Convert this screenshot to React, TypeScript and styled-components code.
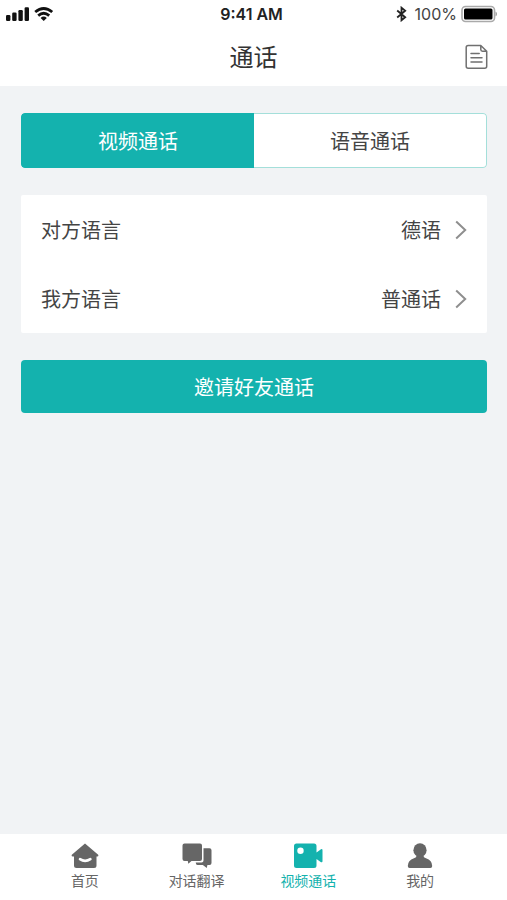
import React, { useState } from "react";
import styled, { createGlobalStyle } from "styled-components";

const teal = "#14b2ae";

const GlobalStyle = createGlobalStyle`
  * { box-sizing: border-box; }
  body {
    margin: 0;
    background: #f1f3f5;
    color: #444;
    font-family: "Noto Sans CJK SC", sans-serif;
  }
  button { font: inherit; color: inherit; border: 0; padding: 0; background: none; cursor: pointer; }
  svg { display: block; flex: none; }
`;

const Page = styled.div`
  display: flex;
  flex-direction: column;
  min-height: 100vh;
`;

const StatusBar = styled.div`
  display: grid;
  grid-template-columns: 1fr auto 1fr;
  align-items: center;
  height: 28px;
  padding: 0 10px 0 6px;
  background: #fff;
  color: #222;
  font: 400 16px/20px Inter, sans-serif;
`;

const StatusGroup = styled.div<{ $end?: boolean }>`
  display: flex;
  align-items: center;
  justify-content: ${(p) => (p.$end ? "flex-end" : "flex-start")};
  gap: 4px;
`;

const Clock = styled.time`
  font-weight: 600;
`;

const Percent = styled.span`
  margin-left: 4px;
  color: #444;
`;

const Header = styled.header`
  display: grid;
  grid-template-columns: 1fr auto 1fr;
  align-items: center;
  height: 58px;
  padding: 0 19px;
  background: #fff;
`;

const Title = styled.h1`
  grid-column: 2;
  margin: 0;
  padding-bottom: 2px;
  color: #333;
  font-size: 24px;
  font-weight: 400;
  line-height: 36px;
`;

const IconButton = styled.button`
  justify-self: end;
`;

const Content = styled.main`
  display: flex;
  flex: 1;
  flex-direction: column;
  gap: 27px;
  padding: 27px 20px 27px 21px;
  font-size: 20px;
  line-height: 30px;
`;

const Segments = styled.div`
  display: flex;
  height: 55px;
  border-radius: 4px;
  overflow: hidden;
`;

const Segment = styled.button<{ $active: boolean }>`
  flex: 1;
  border: 1px solid ${(p) => (p.$active ? teal : "#a4dfda")};
  background: ${(p) => (p.$active ? teal : "#fff")};
  color: ${(p) => (p.$active ? "#fff" : "#444")};
  &:first-child { border-right: 0; border-radius: 4px 0 0 4px; }
  &:last-child { border-left: 0; border-radius: 0 4px 4px 0; }
`;

const Card = styled.div`
  border-radius: 2px;
  background: #fff;
`;

const LanguageRow = styled.button`
  display: flex;
  align-items: center;
  width: 100%;
  height: 69px;
  padding: 0 20px;
`;

const RowValue = styled.span`
  margin: 0 14px 0 auto;
`;

const PrimaryButton = styled.button`
  height: 53px;
  border-radius: 4px;
  background: ${teal};
  color: #fff;
`;

const TabBar = styled.nav`
  display: grid;
  grid-template-columns: repeat(4, 1fr);
  height: 66px;
  padding: 0 31px 0 29px;
  background: #fff;
`;

const TabLink = styled.a<{ $active?: boolean }>`
  display: flex;
  flex-direction: column;
  align-items: center;
  gap: 1px;
  padding-top: 8px;
  color: ${(p) => (p.$active ? teal : "#666")};
  font-size: 14px;
  line-height: 20px;
  text-decoration: none;
`;

const SignalIcon = () => (
  <svg width="24" height="14" viewBox="0 0 24 14" fill="#111" aria-hidden="true">
    <rect x="0" y="8" width="4.4" height="6" rx="1.2" />
    <rect x="6.2" y="5.5" width="4.4" height="8.5" rx="1.2" />
    <rect x="12.4" y="3" width="4.4" height="11" rx="1.2" />
    <rect x="18.6" y="0.3" width="4.4" height="13.7" rx="1.2" />
  </svg>
);

const WifiIcon = () => (
  <svg width="20" height="14" viewBox="0 0 20 14" fill="none" stroke="#111" strokeWidth="2.8" aria-hidden="true">
    <path d="M1.2 5Q9.7-2 18.2 5" />
    <path d="M4.2 8.6Q9.7 4 15.2 8.600" />
    <path d="M6.6 10.900Q9.700 8.200 12.800 10.900L9.700 13.900Z" fill="#111" stroke="none" />
  </svg>
);

const BluetoothIcon = () => (
  <svg width="11" height="16" viewBox="0 0 11 16" fill="none" stroke="#222" strokeWidth="1.8" aria-hidden="true">
    <path d="M1.200 4.500l8 6.800-3.700 3v-12.600L9.200 4.700 1.200 11.500" />
  </svg>
);

const BatteryIcon = () => (
  <svg width="36" height="18" viewBox="0 0 36 18" aria-hidden="true">
    <rect x="1" y="1.5" width="32.500" height="15" rx="3.5" fill="#fff" stroke="#aaa" strokeWidth="1.6" />
    <rect x="3" y="3.5" width="28.500" height="11" rx="1.5" fill="#000" />
    <path d="M34.500 6.5q1.500.6 1.500 2.5t-1.500 2.5z" fill="#999" />
  </svg>
);

const DocumentIcon = () => (
  <svg width="23" height="26" viewBox="0 0 23 26" fill="none" stroke="#707070" strokeWidth="1.5" strokeLinejoin="round" aria-hidden="true">
    <path d="M15.800 1.500H3.200Q1.200 1.500 1.200 3.500v18.800q0 2 2 2h16.500q2 0 2-2V7.200zv4q0 1.700 1.700 1.700h4.200" />
    <path d="M6 9.600h8.200M6 13.800h11M6 18h11" strokeLinecap="round" />
  </svg>
);

const ChevronIcon = () => (
  <svg width="12" height="20" viewBox="0 0 12 20" fill="none" stroke="#8e8e8e" strokeWidth="2" aria-hidden="true">
    <path d="M1.200 1.500L10.200 10l-9 8.500" />
  </svg>
);

const HomeIcon = () => (
  <svg width="28" height="27" viewBox="0 0 28 27" aria-hidden="true">
    <path
      d="M14 1.500L27.200 12.800q.8 1.500-.8 1.700H25.500v9q0 2.500-2.500 2.500H5.500Q3 26 3 23.500V14.500H1.600Q0 14.300.8 12.800z"
      fill="currentColor"
    />
    <path d="M9 17.200q5 3.300 10.400 0" fill="none" stroke="#fff" strokeWidth="2.600" strokeLinecap="round" />
  </svg>
);

const ChatIcon = () => (
  <svg width="30" height="27" viewBox="0 0 30 27" fill="currentColor" aria-hidden="true">
    <path d="M2.500 1.500H18q2 0 2 2V17q0 2-2 2H9.500L6.300 21.800 5.800 19H2.500q-2 0-2-2V3.500q0-2 2-2z" />
    <path d="M21.500 6.300h6q2 0 2 2V21q0 2-2 2H25.400L24.800 26l-4-3H15.500q-1.600 0-1.800-2.500H19.500q2 0 2-2z" />
  </svg>
);

const VideoIcon = () => (
  <svg width="30" height="27" viewBox="0 0 30 27" aria-hidden="true">
    <path
      d="M3.500 1.500H21q2.500 0 2.500 2.500V10.500L28 7.200q1.500-.6 1.500 1v11q0 1.600-1.500 1L23.500 17v6.500q0 2.500-2.500 2.500H3.500Q1 26 1 23.500V4Q1 1.500 3.500 1.500z"
      fill="currentColor"
    />
    <circle cx="7.500" cy="8.800" r="3.200" fill="#fff" />
  </svg>
);

const PersonIcon = () => (
  <svg width="26" height="27" viewBox="0 0 26 27" fill="currentColor" aria-hidden="true">
    <ellipse cx="13" cy="8.200" rx="6.600" ry="6.900" />
    <path d="M9.500 13.500h7q-.3 2 2.500 2.800 6.200 2.200 6.200 7.700 0 2-1.800 2H2.600Q.8 26 .8 24q0-5.500 6.200-7.700 2.800-.8 2.500-2.800z" />
  </svg>
);

const callTypes = ["视频通话", "语音通话"];

const languages = [
  { label: "对方语言", value: "德语" },
  { label: "我方语言", value: "普通话" },
];

const tabs = [
  { label: "首页", href: "#home", Icon: HomeIcon },
  { label: "对话翻译", href: "#translate", Icon: ChatIcon },
  { label: "视频通话", href: "#call", Icon: VideoIcon },
  { label: "我的", href: "#me", Icon: PersonIcon },
];

export default function App() {
  const [callType, setCallType] = useState(callTypes[0]);

  return (
    <Page>
      <GlobalStyle />
      <StatusBar>
        <StatusGroup>
          <SignalIcon />
          <WifiIcon />
        </StatusGroup>
        <Clock>9:41 AM</Clock>
        <StatusGroup $end>
          <BluetoothIcon />
          <Percent>100%</Percent>
          <BatteryIcon />
        </StatusGroup>
      </StatusBar>
      <Header>
        <Title>通话</Title>
        <IconButton aria-label="通话记录">
          <DocumentIcon />
        </IconButton>
      </Header>
      <Content>
        <Segments role="tablist">
          {callTypes.map((type) => (
            <Segment
              key={type}
              role="tab"
              aria-selected={type === callType}
              $active={type === callType}
              onClick={() => setCallType(type)}
            >
              {type}
            </Segment>
          ))}
        </Segments>
        <Card>
          {languages.map(({ label, value }) => (
            <LanguageRow key={label}>
              <span>{label}</span>
              <RowValue>{value}</RowValue>
              <ChevronIcon />
            </LanguageRow>
          ))}
        </Card>
        <PrimaryButton>邀请好友通话</PrimaryButton>
      </Content>
      <TabBar>
        {tabs.map(({ label, href, Icon }) => (
          <TabLink
            key={label}
            href={href}
            $active={href === "#call"}
            aria-current={href === "#call" ? "page" : undefined}
          >
            <Icon />
            {label}
          </TabLink>
        ))}
      </TabBar>
    </Page>
  );
}
